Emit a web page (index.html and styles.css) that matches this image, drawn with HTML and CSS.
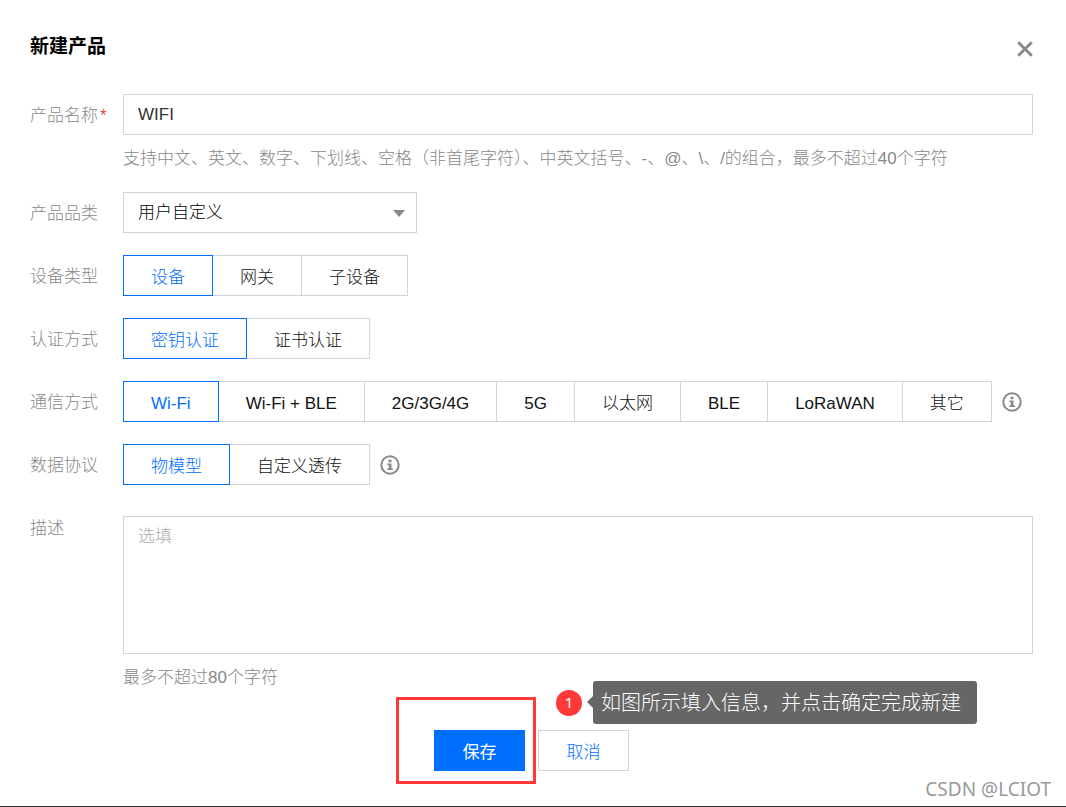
FILE: index.html
```html
<!DOCTYPE html>
<html lang="zh-CN">
<head>
<meta charset="utf-8">
<meta name="viewport" content="width=device-width, initial-scale=1">
<title>新建产品</title>
<link rel="stylesheet" href="styles.css">
</head>
<body>
<main class="dialog">
  <header class="dialog-header">
    <h1 class="dialog-title">新建产品</h1>
    <button class="close" type="button" aria-label="关闭">
      <svg width="16" height="16" viewBox="0 0 16 16" aria-hidden="true"><path d="M1.2 1.2L14.8 14.8M14.8 1.2L1.2 14.8" fill="none" stroke="#888" stroke-width="2.8"/></svg>
    </button>
  </header>

  <form class="form">
    <div class="row">
      <label class="label" for="name">产品名称<span class="required">*</span></label>
      <div class="field">
        <input class="control" id="name" type="text" value="WIFI">
        <p class="hint">支持中文、英文、数字、下划线、空格（非首尾字符）、中英文括号、-、@、\、/的组合，最多不超过40个字符</p>
      </div>
    </div>

    <div class="row">
      <label class="label" for="category">产品品类</label>
      <div class="field">
        <div class="select-wrap">
          <select class="control" id="category"><option>用户自定义</option></select>
          <svg class="arrow" width="12" height="7" viewBox="0 0 12 7" aria-hidden="true"><path d="M0 0H12L6 7Z" fill="#888"/></svg>
        </div>
      </div>
    </div>

    <div class="row">
      <span class="label" id="device">设备类型</span>
      <div class="segment" role="group" aria-labelledby="device">
        <button class="option selected" type="button" aria-pressed="true">设备</button>
        <button class="option" type="button" aria-pressed="false">网关</button>
        <button class="option" type="button" aria-pressed="false">子设备</button>
      </div>
    </div>

    <div class="row">
      <span class="label" id="auth">认证方式</span>
      <div class="segment" role="group" aria-labelledby="auth">
        <button class="option selected" type="button" aria-pressed="true">密钥认证</button>
        <button class="option" type="button" aria-pressed="false">证书认证</button>
      </div>
    </div>

    <div class="row">
      <span class="label" id="network">通信方式</span>
      <div class="segment" role="group" aria-labelledby="network">
        <button class="option selected" type="button" aria-pressed="true">Wi-Fi</button>
        <button class="option" type="button" aria-pressed="false">Wi-Fi + BLE</button>
        <button class="option" type="button" aria-pressed="false">2G/3G/4G</button>
        <button class="option" type="button" aria-pressed="false">5G</button>
        <button class="option" type="button" aria-pressed="false">以太网</button>
        <button class="option" type="button" aria-pressed="false">BLE</button>
        <button class="option" type="button" aria-pressed="false">LoRaWAN</button>
        <button class="option" type="button" aria-pressed="false">其它</button>
      </div>
      <svg class="info" width="20" height="20" viewBox="0 0 20 20" role="img" aria-label="说明"><circle cx="10" cy="10" r="8.7" fill="none" stroke="#888" stroke-width="2"/><path d="M8.5 4.8h3v2.4h-3zM7.3 8.4h4.2v5h1.4v1.6H7.3v-1.6h1.5V10H7.3z" fill="#888"/></svg>
    </div>

    <div class="row">
      <span class="label" id="protocol">数据协议</span>
      <div class="segment" role="group" aria-labelledby="protocol">
        <button class="option selected" type="button" aria-pressed="true">物模型</button>
        <button class="option" type="button" aria-pressed="false">自定义透传</button>
      </div>
      <svg class="info" width="20" height="20" viewBox="0 0 20 20" role="img" aria-label="说明"><circle cx="10" cy="10" r="8.7" fill="none" stroke="#888" stroke-width="2"/><path d="M8.5 4.8h3v2.4h-3zM7.3 8.4h4.2v5h1.4v1.6H7.3v-1.6h1.5V10H7.3z" fill="#888"/></svg>
    </div>

    <div class="row">
      <label class="label" for="desc">描述</label>
      <div class="field field-text">
        <textarea class="control area" id="desc" placeholder="选填"></textarea>
        <p class="hint">最多不超过80个字符</p>
      </div>
    </div>

    <div class="footer">
      <div class="actions">
        <button class="button primary" type="submit">保存</button>
        <button class="button" type="button">取消</button>
        <div class="highlight"></div>
        <div class="note">
          <span class="step">1</span>
          <span class="bubble">如图所示填入信息，并点击确定完成新建</span>
        </div>
      </div>
    </div>
  </form>
  <div class="watermark">CSDN @LCIOT</div>
</main>
</body>
</html>
```
FILE: styles.css
```css
* {
  box-sizing: border-box;
}

body {
  margin: 0;
  background: #fff;
  color: #000;
  font: 300 17px/24px "Liberation Sans", "Noto Sans CJK SC", sans-serif;
}

button,
input,
select,
textarea {
  margin: 0;
  font: inherit;
  color: inherit;
}

button {
  cursor: pointer;
}

.dialog {
  position: relative;
  min-height: 100vh;
  padding: 33px 33px 35px 30px;
  border-bottom: 1px solid #333;
}

.dialog-header {
  display: flex;
  justify-content: space-between;
  align-items: flex-start;
  margin-bottom: 33px;
}

.dialog-title {
  margin: 0;
  font-size: 19px;
  line-height: 28px;
  font-weight: 700;
}

.close {
  display: flex;
  padding: 8px 0 0;
  border: 0;
  background: none;
}

.form {
  display: flex;
  flex-direction: column;
  gap: 22px;
}

.row {
  display: flex;
  align-items: flex-start;
}

.label {
  display: flex;
  flex: 0 0 93px;
  align-items: center;
  height: 41px;
  padding-top: 2px;
  color: #888;
}

.required {
  margin-left: 2px;
  color: #e54545;
}

.field {
  flex: 1;
  min-width: 0;
}

.field-text {
  padding-top: 9px;
}

.control {
  display: block;
  width: 100%;
  height: 41px;
  padding: 0 14px;
  border: 1px solid #cfd5de;
  border-radius: 0;
  outline: 0;
  background: #fff;
}

input.control {
  color: #333;
}

.area {
  height: 138px;
  padding: 8px 14px;
  resize: none;
}

.area::placeholder {
  color: #aaa;
  opacity: 1;
}

.hint {
  margin: 12px 0 -1px;
  color: #888;
}

.select-wrap {
  position: relative;
  max-width: 294px;
}

.select-wrap .control {
  appearance: none;
}

.arrow {
  position: absolute;
  top: 18px;
  right: 12px;
  pointer-events: none;
}

.segment {
  display: flex;
}

.option {
  height: 41px;
  padding: 4px 27px 0;
  border: 1px solid #cfd5de;
  background: #fff;
  color: #111;
  white-space: nowrap;
}

.option + .option {
  margin-left: -1px;
}

.option.selected {
  z-index: 1;
  border-color: #006eff;
  color: #006eff;
}

.info {
  flex: none;
  align-self: center;
  margin-left: 10px;
}

.footer {
  display: flex;
  justify-content: center;
  padding-top: 19px;
}

.actions {
  position: relative;
  display: flex;
  gap: 13px;
}

.button {
  width: 91px;
  height: 41px;
  padding: 4px 0 0;
  border: 1px solid #cfd5de;
  background: #fff;
  color: #006eff;
}

.button.primary {
  border-color: #006eff;
  background: #006eff;
  color: #fff;
  font-weight: 400;
}

.highlight {
  position: absolute;
  top: -33px;
  left: -38px;
  width: 140px;
  height: 87px;
  border: 3px solid #ff3838;
  pointer-events: none;
}

.note {
  position: absolute;
  top: -49px;
  left: 122px;
  display: flex;
  align-items: center;
  gap: 11px;
}

.step {
  width: 26px;
  height: 26px;
  border-radius: 50%;
  background: #ff3838;
  color: #fff;
  font-family: "Noto Sans", sans-serif;
  font-size: 15px;
  font-weight: 400;
  line-height: 24px;
  text-align: center;
}

.bubble {
  position: relative;
  padding: 2px 16px 0 8px;
  border-radius: 3px;
  background: #666;
  color: #fff;
  font-size: 20px;
  line-height: 41px;
  white-space: nowrap;
}

.bubble::before {
  content: "";
  position: absolute;
  top: 15px;
  left: -6px;
  border: solid transparent;
  border-width: 6px 6px 6px 0;
  border-right-color: #666;
}

.watermark {
  position: absolute;
  right: 15px;
  bottom: 5px;
  color: #999;
  font-family: "Noto Sans", sans-serif;
  font-size: 19px;
  font-weight: 400;
}
```
